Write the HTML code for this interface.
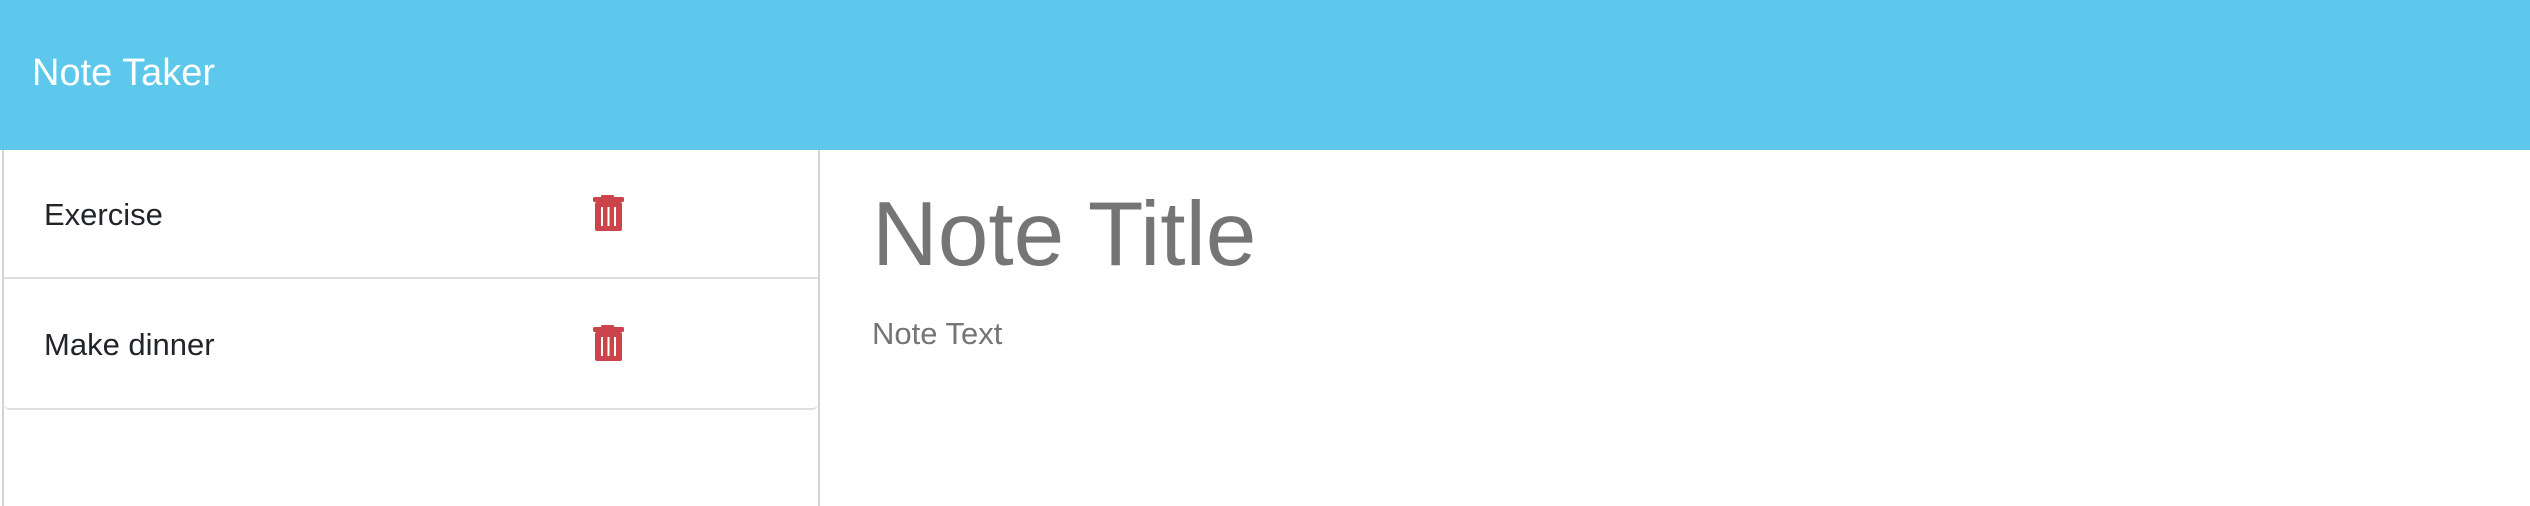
<!DOCTYPE html><html><head><style>
body{margin:0;width:2530px;height:506px;overflow:hidden;background:#fff;font-family:"Liberation Sans",sans-serif;position:relative}
.hdr{position:absolute;left:0;top:0;width:2530px;height:150px;background:#5dc8ec}
.hdr span{position:absolute;left:32px;top:51px;font-size:38px;color:#fff;line-height:44px}
.panel{position:absolute;left:2px;top:150px;width:814px;height:356px;border-left:2px solid #d4d4d4;border-right:2px solid #d4d4d4}
.list{position:absolute;left:0;top:0;width:814px;height:258px;border-bottom:2px solid #dedede;border-radius:0 0 6px 6px}
.item{position:absolute;left:0;width:814px;height:128px}
.item span{position:absolute;left:40px;font-size:31px;color:#212529;top:47px}
.sep{position:absolute;left:0;top:127px;width:814px;height:2px;background:#dedede}
svg{position:absolute}
.t{position:absolute;color:#757575}
</style></head><body>
<div class="hdr"><span>Note Taker</span></div>
<div class="panel"><div class="list">
<div class="item" style="top:0"><span>Exercise</span></div>
<div class="sep"></div>
<div class="item" style="top:130px"><span>Make dinner</span></div>
</div></div>
<svg style="left:592px;top:194px" width="34" height="38" viewBox="0 0 34 38"><rect x="9" y="1" width="13" height="4" rx="1.5" fill="#cc444b"/><rect x="1" y="3" width="31" height="5" rx="1.5" fill="#cc444b"/><rect x="3" y="8" width="27" height="29" rx="2" fill="#cc444b"/><rect x="9" y="13" width="2" height="19" fill="#fff"/><rect x="15.5" y="13" width="2" height="19" fill="#fff"/><rect x="22" y="13" width="2" height="19" fill="#fff"/></svg>
<svg style="left:592px;top:324px" width="34" height="38" viewBox="0 0 34 38"><rect x="9" y="1" width="13" height="4" rx="1.5" fill="#cc444b"/><rect x="1" y="3" width="31" height="5" rx="1.5" fill="#cc444b"/><rect x="3" y="8" width="27" height="29" rx="2" fill="#cc444b"/><rect x="9" y="13" width="2" height="19" fill="#fff"/><rect x="15.5" y="13" width="2" height="19" fill="#fff"/><rect x="22" y="13" width="2" height="19" fill="#fff"/></svg>
<div class="t" style="left:872px;top:183px;font-size:91px;line-height:104px">Note Title</div>
<div class="t" style="left:872px;top:315px;font-size:31px;line-height:38px">Note Text</div>
</body></html>
